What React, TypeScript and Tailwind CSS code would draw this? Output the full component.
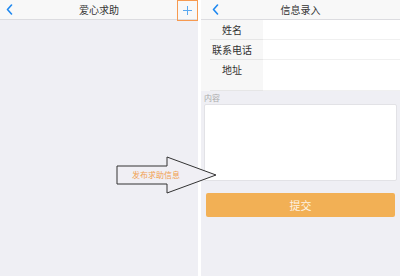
import React from 'react';

const font = { fontFamily: '"Noto Sans CJK SC", "Noto Sans", sans-serif' };

const BackIcon = () => (
  <svg className="w-[7px] h-[11px]" viewBox="0 0 7 11" fill="none" stroke="#1e88f0" strokeWidth={1.6} strokeLinecap="round" strokeLinejoin="round">
    <path d="M5.5 1L1.5 5.5L5.5 10" />
  </svg>
);

const NavBar = ({ title, right, backPad }: { title: string; right?: React.ReactNode; backPad: string }) => (
  <div className="h-[20px] bg-[#f8f8f8] border-b border-[#dcdce0] flex items-center relative">
    <div className={`${backPad} flex items-center`}><BackIcon /></div>
    <div className="absolute inset-0 flex items-center justify-center text-[10px] text-[#333] pointer-events-none">{title}</div>
    <div className="ml-auto h-full">{right}</div>
  </div>
);

const FormRow = ({ label, tall }: { label: string; tall?: boolean }) => (
  <div className={`flex ${tall ? 'h-[31px]' : 'h-[20px]'}`}>
    <div className="w-[62px] bg-[#f7f7f7] flex">
      <div className="ml-[9px] pr-[9px] flex-1 border-b border-[#e6e6e6] flex items-start justify-center pt-[3px] text-[10px] leading-[14px] text-[#333] whitespace-nowrap">
        {label}
      </div>
    </div>
    <div className="flex-1 bg-white border-b border-[#f0f0f0]" />
  </div>
);

const Arrow = () => (
  <div className="absolute left-[116px] top-[156px] w-[102px] h-[39px]">
    <svg className="absolute inset-0" width="102" height="39" viewBox="0 0 102 39" fill="none">
      <path d="M1 10H51V1L100 19L51 37V28H1Z" fill="#f0eff4" stroke="#333" strokeWidth={1} />
    </svg>
    <div className="absolute left-[16px] top-[11px] text-[8px] text-[#f0a050] leading-[16px]">发布求助信息</div>
  </div>
);

export default function App() {
  return (
    <div className="w-[400px] h-[276px] bg-white flex relative overflow-hidden" style={font}>
      {/* left screen */}
      <div className="w-[198px] h-full bg-[#efeff4] flex flex-col">
        <NavBar
          title="爱心求助"
          backPad="pl-[6px]"
          right={
            <div className="w-[21px] h-[21px] border-[1.5px] border-[#f79a50] flex items-center justify-center">
              <svg className="w-[9px] h-[9px]" viewBox="0 0 9 9" stroke="#5aa8f0" strokeWidth={1}>
                <path d="M4.5 0V9M0 4.5H9" />
              </svg>
            </div>
          }
        />
      </div>

      {/* right screen */}
      <div className="ml-[3px] flex-1 h-full bg-[#efeff4] flex flex-col">
        <NavBar title="信息录入" backPad="pl-[11px]" />
        <div className="flex flex-col">
          <FormRow label="姓名" />
          <FormRow label="联系电话" />
          <FormRow label="地址" tall />
        </div>
        <div className="px-[3px] pt-[1px] text-[8px] leading-[12px] text-[#aaa]">内容</div>
        <div className="mx-[3px] h-[77px] bg-white border border-[#e2e2e6] rounded-[2px]" />
        <div className="mx-[5px] mt-[12px] h-[24px] bg-[#f2b055] rounded-[2px] flex items-center justify-center text-[11px] text-[#fdf3e4]">
          提交
        </div>
      </div>

      <Arrow />
    </div>
  );
}
